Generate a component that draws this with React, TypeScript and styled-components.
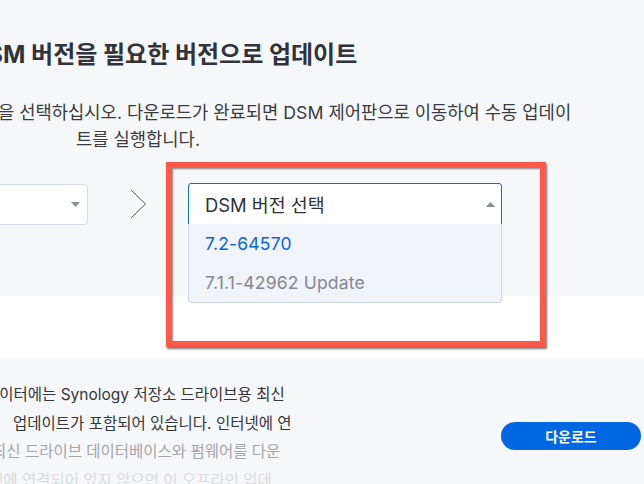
import React from 'react';
import styled, { createGlobalStyle } from 'styled-components';

const GlobalStyle = createGlobalStyle`
  html, body {
    margin: 0;
    padding: 0;
    background: #fff;
  }
  body {
    font-family: Inter, "Noto Sans CJK KR", sans-serif;
    color: #333;
  }
`;

const OPTIONS = [
  { label: '7.2-64570', active: true },
  { label: '7.1.1-42962 Update', active: false },
];

const NOTES: { text: string; shift: number; tone: 'dark' | 'mid' | 'light' }[] = [
  { text: '데이터에는 Synology 저장소 드라이브용 최신', shift: -15, tone: 'dark' },
  { text: '업데이트가 포함되어 있습니다. 인터넷에 연', shift: 13, tone: 'dark' },
  { text: '최신 드라이브 데이터베이스와 펌웨어를 다운', shift: -8, tone: 'mid' },
  { text: '넷에 연결되어 있지 않으면 이 오프라인 업데', shift: -11, tone: 'light' },
];

const Caret: React.FC<{ up?: boolean }> = ({ up }) => (
  <svg width="9" height="5" viewBox="0 0 9 5">
    <path d={up ? 'M0 5 L4.5 0 L9 5 Z' : 'M0 0 L9 0 L4.5 5 Z'} fill="#8a8d91" />
  </svg>
);

const Chevron = () => (
  <svg width="17" height="30" viewBox="0 0 17 30">
    <path d="M1 1 L15.5 15 L1 29" fill="none" stroke="#555" strokeWidth="1" />
  </svg>
);

const App: React.FC = () => {
  return (
    <>
      <GlobalStyle />
      <Page>
        <TopSection>
          <Heading>DSM 버전을 필요한 버전으로 업데이트</Heading>
          <Intro>
            <IntroLine $shift={-2}>을 선택하십시오. 다운로드가 완료되면 DSM 제어판으로 이동하여 수동 업데이</IntroLine>
            <IntroLine $shift={76}>트를 실행합니다.</IntroLine>
          </Intro>
          <PickerRow>
            <SourceSelect>
              <Caret />
            </SourceSelect>
            <ArrowSlot>
              <Chevron />
            </ArrowSlot>
            <VersionSelect>
              <SelectLabel>DSM 버전 선택</SelectLabel>
              <Caret up />
              <OptionList>
                {OPTIONS.map((o) => (
                  <OptionItem key={o.label} $active={o.active}>
                    {o.label}
                  </OptionItem>
                ))}
              </OptionList>
            </VersionSelect>
          </PickerRow>
        </TopSection>
        <Spacer />
        <BottomSection>
          <NoteText>
            {NOTES.map((n) => (
              <NoteLine key={n.text} $shift={n.shift} $tone={n.tone}>
                {n.text}
              </NoteLine>
            ))}
          </NoteText>
          <DownloadButton>다운로드</DownloadButton>
        </BottomSection>
        <Highlight />
      </Page>
    </>
  );
};

export default App;

const Page = styled.div`
  position: relative;
  width: 644px;
  height: 484px;
  overflow: hidden;
  background: #fff;
`;

const TopSection = styled.section`
  height: 296px;
  box-sizing: border-box;
  padding-top: 39px;
  background: #f6f7f9;
`;

const Heading = styled.h1`
  margin: 0 0 0 -30px;
  font-size: 24px;
  line-height: 32px;
  font-weight: 700;
  color: #30333a;
  white-space: nowrap;
`;

const Intro = styled.div`
  margin-top: 28px;
  font-size: 17.7px;
  line-height: 27px;
  color: #383b40;
`;

const IntroLine = styled.div<{ $shift: number }>`
  margin-left: ${(p) => p.$shift}px;
  white-space: nowrap;
`;

const PickerRow = styled.div`
  display: flex;
  align-items: center;
  margin-top: 30px;
  height: 42px;
`;

const SourceSelect = styled.div`
  display: flex;
  align-items: center;
  justify-content: flex-end;
  box-sizing: border-box;
  width: 200px;
  height: 41px;
  margin-left: -112px;
  padding-right: 7px;
  background: #fff;
  border: 1px solid #d3dbe6;
  border-radius: 4px;
`;

const ArrowSlot = styled.div`
  display: flex;
  margin-left: 42px;
  margin-right: 41px;
`;

const VersionSelect = styled.div`
  position: relative;
  display: flex;
  align-items: center;
  justify-content: space-between;
  box-sizing: border-box;
  width: 314px;
  height: 42px;
  padding: 0 6px 0 16px;
  background: #fff;
  border: 1px solid #0a6ce6;
  border-radius: 3px 3px 0 0;
`;

const SelectLabel = styled.span`
  font-size: 18.4px;
  color: #2f3237;
`;

const OptionList = styled.ul`
  position: absolute;
  top: 100%;
  left: -1px;
  right: -1px;
  margin: 0;
  padding: 0;
  list-style: none;
  background: #f0f3f7;
  border: 1px solid #cdd6e3;
  border-top: none;
  border-radius: 0 0 4px 4px;
`;

const OptionItem = styled.li<{ $active: boolean }>`
  height: 39px;
  display: flex;
  align-items: center;
  padding-left: 16px;
  font-size: 17.5px;
  letter-spacing: 0.2px;
  color: ${(p) => (p.$active ? '#0a64dc' : '#85888d')};
`;

const Spacer = styled.div`
  height: 61px;
  background: #fff;
`;

const BottomSection = styled.section`
  display: flex;
  justify-content: space-between;
  align-items: flex-start;
  height: 127px;
  padding: 24px 3px 0 0;
  background: #f6f7f9;
`;

const NoteText = styled.div`
  font-size: 15.5px;
  line-height: 28.5px;
`;

const NoteLine = styled.div<{ $shift: number; $tone: 'dark' | 'mid' | 'light' }>`
  margin-left: ${(p) => p.$shift}px;
  white-space: nowrap;
  color: ${(p) => (p.$tone === 'dark' ? '#33363b' : p.$tone === 'mid' ? '#a3a6aa' : '#d9dbde')};
`;

const DownloadButton = styled.button`
  margin-top: 41px;
  width: 140px;
  height: 28px;
  border: none;
  border-radius: 14px;
  background: #0066e1;
  color: #fff;
  font-family: Inter, "Noto Sans CJK KR", sans-serif;
  font-size: 14px;
  font-weight: 700;
  cursor: pointer;
`;

const Highlight = styled.div`
  position: absolute;
  left: 166px;
  top: 162px;
  width: 380px;
  height: 185px;
  box-sizing: border-box;
  border: 6px solid #ff5849;
  box-shadow: 1px 2px 2px rgba(0, 0, 0, 0.55), inset 1px 1px 2px rgba(0, 0, 0, 0.45);
  pointer-events: none;
`;
